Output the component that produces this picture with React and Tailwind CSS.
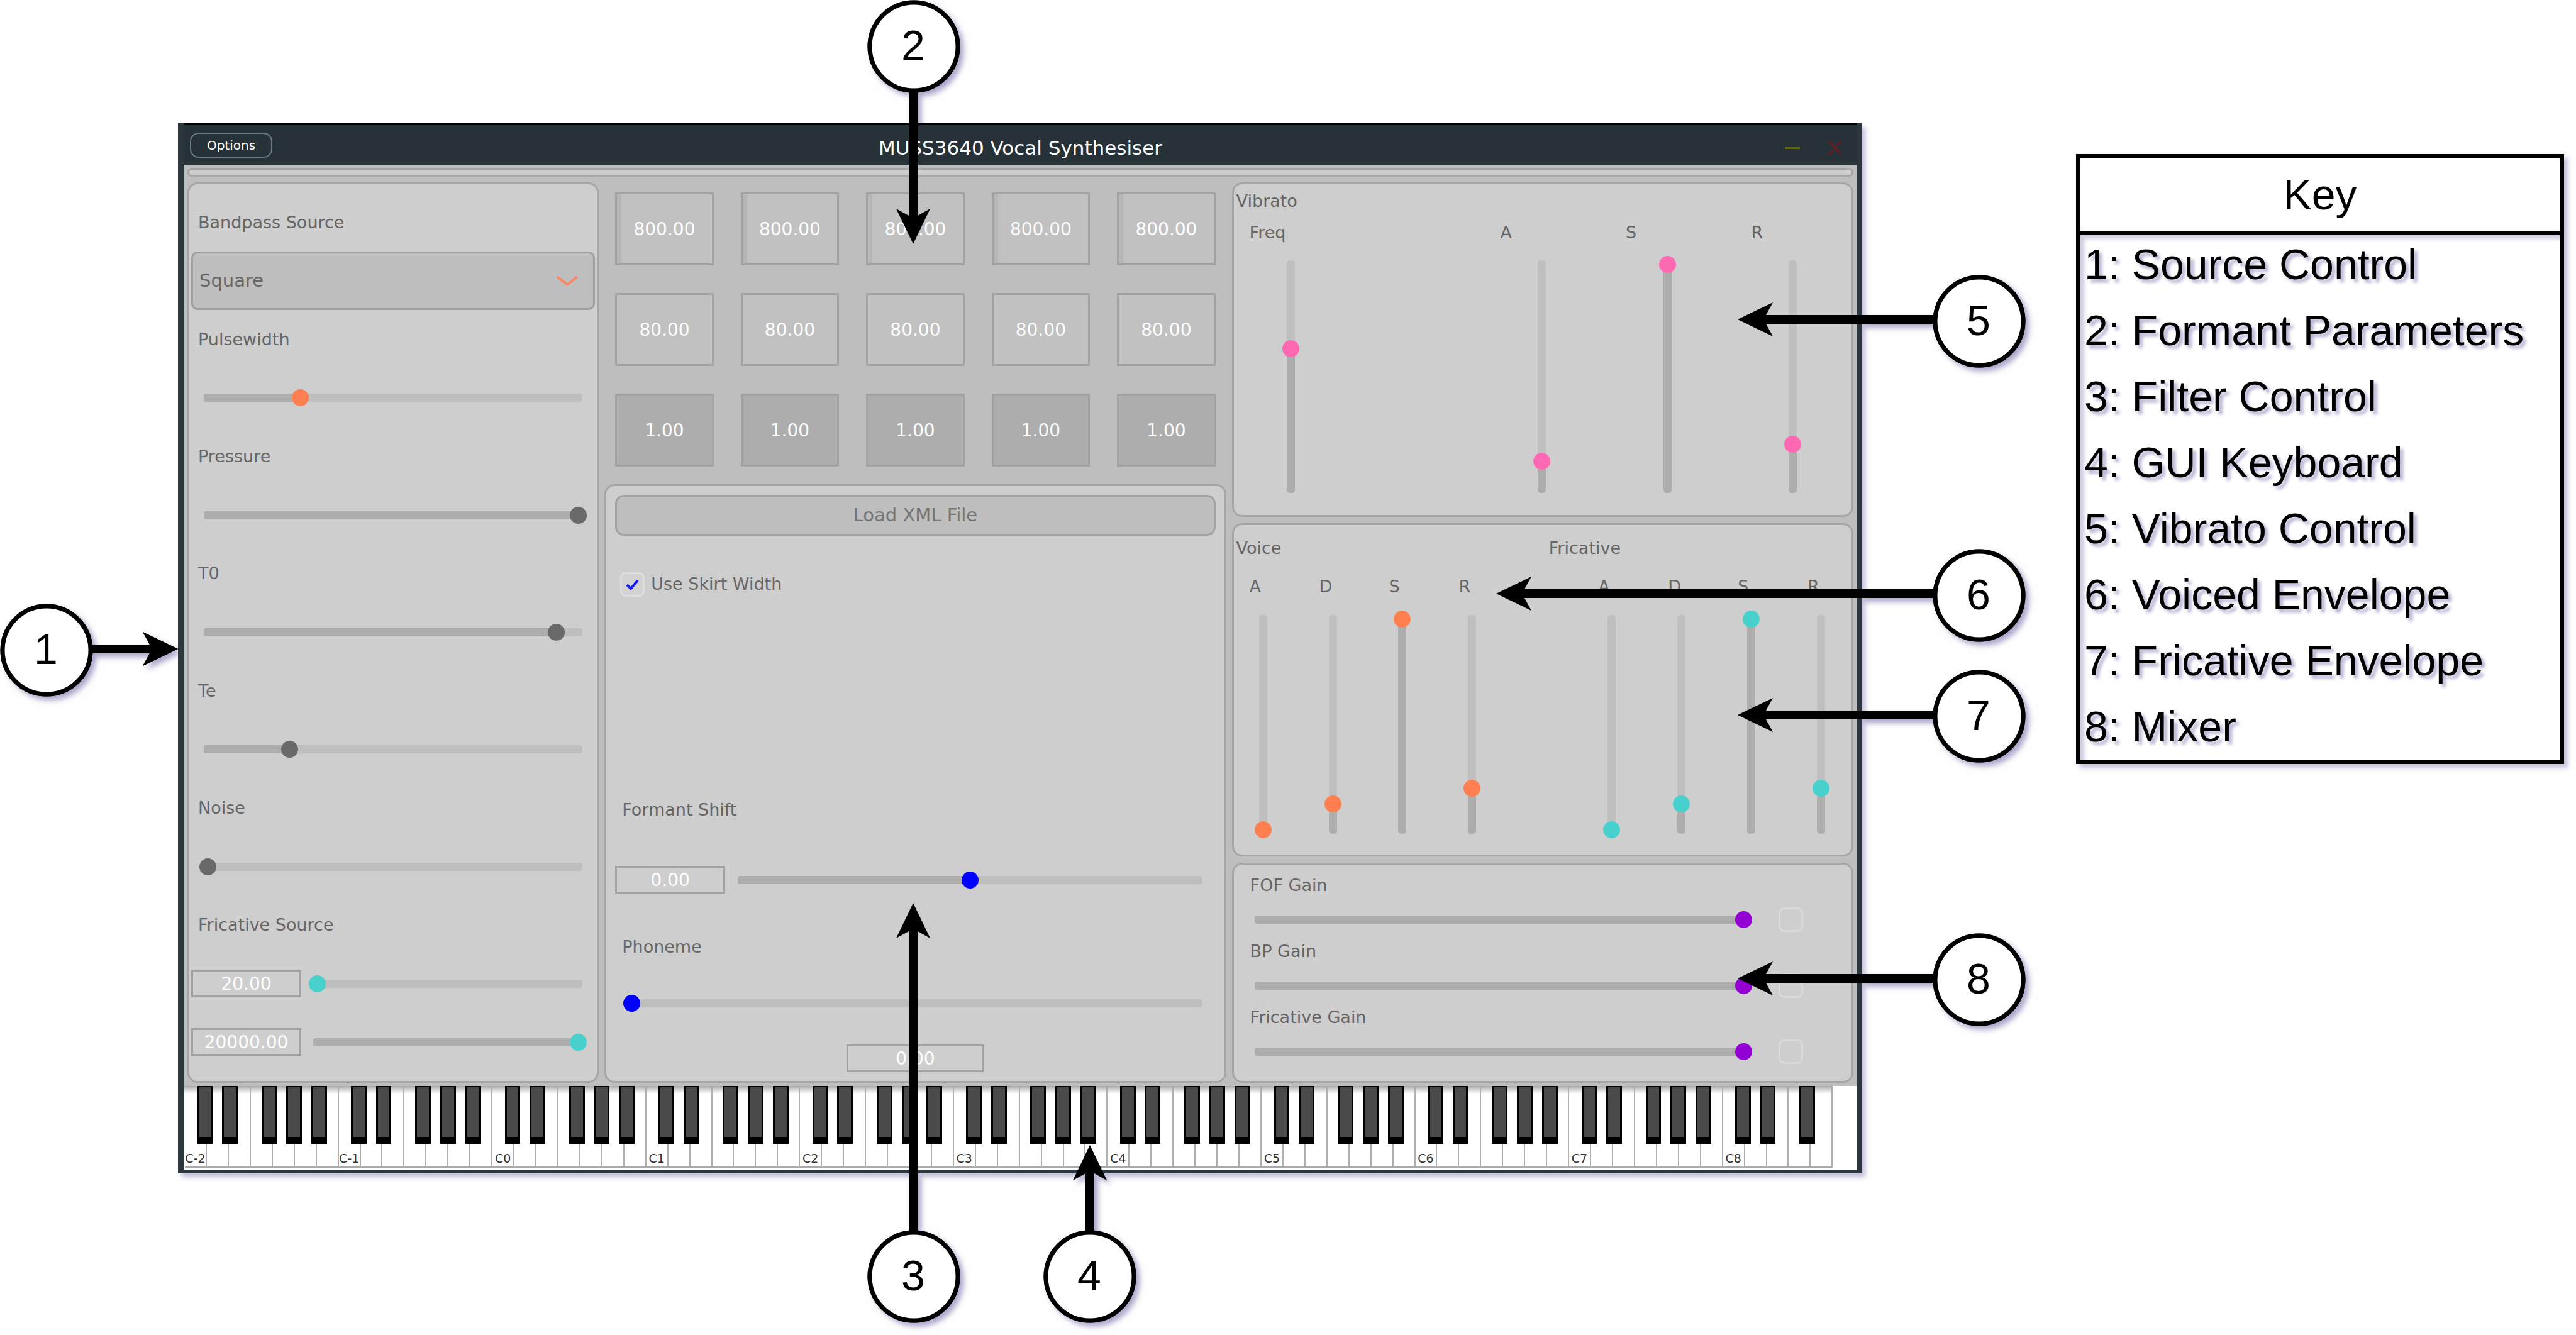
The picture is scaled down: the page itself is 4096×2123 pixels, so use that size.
import React, { useState } from "react";

const LABEL = "text-[27px] leading-[40px] text-[#666666] whitespace-nowrap";
const PANEL = "rounded-[16px] border-[3px] border-[#a6a6a6] bg-[#cecece]";
const VALUE =
  "min-w-0 border-[3px] border-[#a2a2a2] bg-transparent p-0 text-center text-[28px] leading-[36px] text-white outline-none";
const THUMB =
  "[&::-webkit-slider-thumb]:appearance-none [&::-webkit-slider-thumb]:size-[27px] [&::-webkit-slider-thumb]:rounded-full [&::-webkit-slider-thumb]:bg-current";

const TONES = {
  coral: "text-[#ff7f50]",
  grey: "text-[#696969]",
  teal: "text-[#48d1cc]",
  blue: "text-[#0000ff]",
  pink: "text-[#ff69b4]",
  violet: "text-[#9400d3]",
};

function HSlider({ label, value, tone, id }) {
  const [v, setV] = useState(value);
  return (
    <div className="grid min-w-0 flex-1 items-center">
      <div className="mx-[7px] h-[13px] overflow-hidden rounded-[4px] bg-[#bebebe] [grid-area:1/1]">
        <div className="h-full bg-[#adadad]" style={{ width: `${v}%` }} />
      </div>
      <input
        id={id}
        type="range"
        aria-label={label}
        value={v}
        onChange={(e) => setV(Number(e.target.value))}
        className={`m-0 h-[27px] w-full cursor-pointer appearance-none bg-transparent [grid-area:1/1] ${THUMB} ${TONES[tone]}`}
      />
    </div>
  );
}

function VSlider({ label, value, tone, id, height }) {
  const [v, setV] = useState(value);
  return (
    <div className={`grid justify-center justify-items-center ${height}`}>
      <div className="my-[7px] flex w-[13px] flex-col justify-end overflow-hidden rounded-[5px] bg-[#bfbfbf] [grid-area:1/1]">
        <div className="w-full bg-[#adadad]" style={{ height: `${v}%` }} />
      </div>
      <input
        id={id}
        type="range"
        aria-label={label}
        value={v}
        onChange={(e) => setV(Number(e.target.value))}
        className={`m-0 h-full w-[27px] cursor-pointer appearance-none bg-transparent [direction:rtl] [grid-area:1/1] [writing-mode:vertical-lr] ${THUMB} ${TONES[tone]}`}
      />
    </div>
  );
}

function SourceSlider({ id, label, value, tone }) {
  return (
    <>
      <label htmlFor={id} className={`${LABEL} pl-[14px]`}>
        {label}
      </label>
      <div className="flex pl-[16px] pr-[16px]">
        <HSlider id={id} value={value} tone={tone} />
      </div>
    </>
  );
}

function SourcePanel() {
  return (
    <section className={`${PANEL} grid auto-rows-[93px] content-between items-center pb-[15px] pt-[14px]`}>
      <label htmlFor="bandpass" className={`${LABEL} pl-[14px]`}>
        Bandpass Source
      </label>
      <div className="relative mx-[3px]">
        <select
          id="bandpass"
          defaultValue="Square"
          className="h-[93px] w-full appearance-none rounded-[10px] border-[3px] border-[#9f9f9f] bg-[#bebebe] pl-[10px] text-[29px] text-[#666666] outline-none"
        >
          <option>Square</option>
          <option>Saw</option>
          <option>LF Model</option>
        </select>
        <svg
          viewBox="0 0 34 18"
          className="pointer-events-none absolute right-[27px] top-[38px] h-[18px] w-[34px]"
          fill="none"
          stroke="#fb8664"
          strokeWidth="4"
        >
          <path d="M1 2 L17 14.5 L33 2" />
        </svg>
      </div>
      <SourceSlider id="pulsewidth" label="Pulsewidth" value={25} tone="coral" />
      <SourceSlider id="pressure" label="Pressure" value={100} tone="grey" />
      <SourceSlider id="t0" label="T0" value={94} tone="grey" />
      <SourceSlider id="te" label="Te" value={22} tone="grey" />
      <SourceSlider id="noise" label="Noise" value={0} tone="grey" />
      <span className={`${LABEL} pl-[14px]`}>Fricative Source</span>
      <div className="flex items-center gap-[12px] pl-[3px] pr-[16px]">
        <input aria-label="Low cutoff value" defaultValue="20.00" className={`${VALUE} h-[44px] w-[175px]`} />
        <HSlider label="Low cutoff" value={0} tone="teal" />
      </div>
      <div className="flex items-center gap-[12px] pl-[3px] pr-[16px]">
        <input aria-label="High cutoff value" defaultValue="20000.00" className={`${VALUE} h-[44px] w-[175px]`} />
        <HSlider label="High cutoff" value={100} tone="teal" />
      </div>
    </section>
  );
}

const FORMANT_ROWS = [
  { name: "Frequency", value: "800.00", look: "bg-[#c1c1c1] shadow-[inset_7px_0_0_#b6b6b6]" },
  { name: "Bandwidth", value: "80.00", look: "bg-[#c1c1c1]" },
  { name: "Gain", value: "1.00", look: "bg-[#adadad]" },
];

function FormantGrid() {
  return (
    <div className="grid grid-cols-5 gap-x-[43px] gap-y-[44px] px-[17px] pb-[28px] pt-[16px]">
      {FORMANT_ROWS.map((row) =>
        [1, 2, 3, 4, 5].map((n) => (
          <input
            key={row.name + n}
            aria-label={`${row.name} ${n}`}
            defaultValue={row.value}
            className={`h-[116px] w-full min-w-0 border-[3px] border-[#a2a2a2] p-0 text-center text-[28px] text-white outline-none ${row.look}`}
          />
        ))
      )}
    </div>
  );
}

function FilterPanel() {
  return (
    <section className={`${PANEL} flex flex-1 flex-col px-[14px] py-[14px]`}>
      <button className="h-[65px] rounded-[14px] border-[3px] border-[#a2a2a2] bg-[#bebebe] text-[29px] text-[#757575]">
        Load XML File
      </button>
      <label className="ml-[8px] mt-[57px] flex items-center gap-[10px] self-start">
        <span className="grid">
          <input
            type="checkbox"
            defaultChecked
            className="peer size-[39px] appearance-none rounded-[9px] border-[3px] border-[#dedede] bg-[#d2d2d2] [grid-area:1/1]"
          />
          <svg
            viewBox="0 0 39 39"
            className="pointer-events-none hidden size-[39px] [grid-area:1/1] peer-checked:block"
            fill="none"
            stroke="#1616ff"
            strokeWidth="4"
          >
            <path d="M11 20 L17 26 L28 13" />
          </svg>
        </span>
        <span className={LABEL}>Use Skirt Width</span>
      </label>
      <label htmlFor="shift" className={`${LABEL} mt-auto pl-[11px]`}>
        Formant Shift
      </label>
      <div className="mt-[69px] flex items-center gap-[13px]">
        <input aria-label="Formant shift value" defaultValue="0.00" className={`${VALUE} h-[44px] w-[175px]`} />
        <HSlider id="shift" value={50} tone="blue" />
        <span className="w-px" />
      </div>
      <label htmlFor="phoneme" className={`${LABEL} mt-[65px] pl-[11px]`}>
        Phoneme
      </label>
      <div className="mt-[56px] flex pl-[13px] pr-[14px]">
        <HSlider id="phoneme" value={0} tone="blue" />
      </div>
      <input
        aria-label="Phoneme value"
        defaultValue="0.00"
        className={`${VALUE} mt-[52px] h-[44px] w-[219px] self-center`}
      />
    </section>
  );
}

function VibratoPanel() {
  const cols = [
    ["Freq", 62.4],
    null,
    ["A", 12.4],
    ["S", 100],
    ["R", 20],
  ];
  return (
    <section className={`${PANEL} pb-[28px] pt-[7px]`}>
      <h2 className={`${LABEL} pl-[4px]`}>Vibrato</h2>
      <div className="mt-[10px] grid grid-cols-5 gap-[29px] pl-[6px] pr-[8px]">
        {cols.map((c, i) =>
          c ? (
            <div key={i} className="flex flex-col gap-[17px]">
              <label htmlFor={`vib${i}`} className={`${LABEL} pl-[19px]`}>
                {c[0]}
              </label>
              <VSlider id={`vib${i}`} value={c[1]} tone="pink" height="h-[384px]" />
            </div>
          ) : (
            <div key={i} />
          )
        )}
      </div>
    </section>
  );
}

function EnvelopePanel() {
  const adsr = [
    ["A", 0],
    ["D", 12.2],
    ["S", 100],
    ["R", 19.8],
  ];
  const cols = [
    ...adsr.map(([l, v]) => [l, v, "coral", "Voice"]),
    null,
    ...adsr.map(([l, v]) => [l, v, "teal", "Fricative"]),
  ];
  return (
    <section className={`${PANEL} pb-[26px] pt-[17px]`}>
      <div className="grid grid-cols-[499fr_483fr] pl-[4px]">
        <h2 className={LABEL}>Voice</h2>
        <h2 className={LABEL}>Fricative</h2>
      </div>
      <div className="mt-[21px] grid grid-cols-9 gap-[30px] pl-[6px] pr-[8px]">
        {cols.map((c, i) =>
          c ? (
            <div key={i} className="flex flex-col gap-[18px]">
              <label htmlFor={`env${i}`} className={`${LABEL} pl-[19px]`}>
                {c[0]}
              </label>
              <VSlider id={`env${i}`} label={`${c[3]} ${c[0]}`} value={c[1]} tone={c[2]} height="h-[362px]" />
            </div>
          ) : (
            <div key={i} />
          )
        )}
      </div>
    </section>
  );
}

function MixerPanel() {
  return (
    <section className={`${PANEL} flex flex-1 flex-col gap-[11px] pb-[27px] pl-[26px] pr-[77px] pt-[13px]`}>
      {["FOF Gain", "BP Gain", "Fricative Gain"].map((name) => (
        <div key={name} className="flex flex-col gap-[15px]">
          <label htmlFor={name} className={LABEL}>
            {name}
          </label>
          <div className="flex items-center gap-[42px]">
            <HSlider id={name} value={100} tone="violet" />
            <input
              type="checkbox"
              aria-label={`Mute ${name}`}
              className="size-[39px] appearance-none rounded-[9px] border-[3px] border-[#dadada]"
            />
          </div>
        </div>
      ))}
    </section>
  );
}

const BLACK_OFFSET = {
  0: "left-[56%]",
  1: "left-[69%]",
  3: "left-[48%]",
  4: "left-[62%]",
  5: "left-[76%]",
};

function Keyboard() {
  return (
    <div className="relative flex h-[133px] bg-white pl-px pr-[38px]">
      {Array.from({ length: 75 }, (_, k) => {
        const note = k % 7;
        return (
          <div key={k} className="relative flex-1">
            <button
              aria-label={`White key ${k + 1}`}
              className="flex h-[131px] w-full items-end justify-center border-b-[3px] border-r-2 border-b-[#a8aaa8] border-r-[#b0b0b0] bg-white pb-[2px] text-[19px] leading-[22px] text-[#333333]"
            >
              {note === 0 ? `C${k / 7 - 2}` : ""}
            </button>
            {BLACK_OFFSET[note] && k < 74 && (
              <button
                aria-label={`Black key ${k + 1}`}
                className={`absolute top-0 z-20 h-[92px] w-[71%] border-x-[3px] border-b-[11px] border-t-2 border-black bg-[#4a4a4a] ${BLACK_OFFSET[note]}`}
              />
            )}
          </div>
        );
      })}
      <div className="pointer-events-none absolute left-0 right-[38px] top-0 z-10 h-[12px] bg-linear-to-b from-[#a9a9a9] to-transparent" />
    </div>
  );
}

function SynthWindow() {
  return (
    <div className="relative flex-1 border-b-[6px] border-l-[10px] border-r-[8px] border-[#2c363d] bg-[#bebebe] shadow-[6px_6px_7px_#c3c1da]">
      <header className="grid h-[66px] grid-cols-3 items-center border-t-2 border-black bg-[#263238] pt-px">
        <button className="ml-[9px] h-[40px] w-[131px] rounded-[14px] border-2 border-[#6c7a83] text-[20px] leading-[34px] text-white">
          Options
        </button>
        <h1 className="pt-[9px] text-center text-[31px] leading-[40px] whitespace-nowrap text-white">
          MUSS3640 Vocal Synthesiser
        </h1>
        <div className="flex items-center justify-end gap-[44px] pr-[22px] pt-[8px]">
          <button aria-label="Minimise" className="h-[4px] w-[24px] bg-[#62661f]" />
          <button aria-label="Close">
            <svg viewBox="0 0 24 24" className="size-[24px]" stroke="#74181f" strokeWidth="2.5">
              <path d="M2 1 L22 23 M22 1 L2 23" />
            </svg>
          </button>
        </div>
      </header>
      <main className="flex flex-col gap-[9px] px-[5px] pb-[5px] pt-[5px]">
        <div className="h-[14px] rounded-full border-[3px] border-[#a6a6a6] bg-[#cecece]" />
        <div className="grid grid-cols-[654fr_988fr_988fr] gap-[9px]">
          <SourcePanel />
          <div className="flex flex-col">
            <FormantGrid />
            <FilterPanel />
          </div>
          <div className="flex flex-col gap-[10px]">
            <VibratoPanel />
            <EnvelopePanel />
            <MixerPanel />
          </div>
        </div>
      </main>
      <Keyboard />
    </div>
  );
}

const KEY_ITEMS = [
  "Source Control",
  "Formant Parameters",
  "Filter Control",
  "GUI Keyboard",
  "Vibrato Control",
  "Voiced Envelope",
  "Fricative Envelope",
  "Mixer",
];

function Legend() {
  return (
    <aside className="mt-[49px] w-[776px] shrink-0 border-[7px] border-black bg-white font-['Liberation_Sans',sans-serif] text-[68px] text-black shadow-[6px_6px_7px_#c3c1da]">
      <h2 className="h-[122px] border-b-[7px] border-black text-center leading-[115px]">Key</h2>
      <ol className="flex flex-col pl-[6px] leading-[105px] shadow-[inset_6px_6px_6px_#cfcce0] [text-shadow:5px_5px_5px_#b4afd0]">
        {KEY_ITEMS.map((item, i) => (
          <li key={item} className="first:-mt-[6px]">{`${i + 1}: ${item}`}</li>
        ))}
      </ol>
    </aside>
  );
}

const CALLOUTS = [
  { n: 1, cx: 74, cy: 1034, x: 283, y: 1032, turn: 0 },
  { n: 2, cx: 1453, cy: 74, x: 1452, y: 388, turn: 90 },
  { n: 3, cx: 1453, cy: 2030, x: 1452, y: 1436, turn: -90 },
  { n: 4, cx: 1733, cy: 2030, x: 1733, y: 1821, turn: -90 },
  { n: 5, cx: 3147, cy: 511, x: 2763, y: 508, turn: 180 },
  { n: 6, cx: 3147, cy: 947, x: 2379, y: 944, turn: 180 },
  { n: 7, cx: 3147, cy: 1139, x: 2763, y: 1137, turn: 180 },
  { n: 8, cx: 3147, cy: 1558, x: 2763, y: 1556, turn: 180 },
];

function CalloutShapes({ c }) {
  const len = Math.hypot(c.cx - c.x, c.cy - c.y) - 70;
  return (
    <>
      <g transform={`translate(${c.x} ${c.y}) rotate(${c.turn})`}>
        <path d={`M0 0 L-56 -27 L-45 -7 L${-len} -7 L${-len} 7 L-45 7 L-56 27 Z`} fill="black" />
      </g>
      <circle cx={c.cx} cy={c.cy} r="70" fill="white" stroke="black" strokeWidth="7" />
    </>
  );
}

export default function App() {
  return (
    <div className="relative flex min-h-screen items-start gap-[341px] bg-[#fefefe] pl-[283px] pr-[19px] pt-[196px] font-['DejaVu_Sans',sans-serif]">
      <svg
        viewBox="0 0 4096 2123"
        className="pointer-events-none absolute inset-0 h-full w-full"
        style={{ filter: "drop-shadow(6px 6px 4px #aaa6ca)" }}
        aria-hidden="true"
      >
        {CALLOUTS.map((c) => (
          <CalloutShapes key={c.n} c={c} />
        ))}
      </svg>
      <SynthWindow />
      <Legend />
      <svg viewBox="0 0 4096 2123" className="pointer-events-none absolute inset-0 z-30 h-full w-full">
        {CALLOUTS.map((c) => (
          <g key={c.n}>
            <CalloutShapes c={c} />
            <text
              x={c.cx - 1}
              y={c.cy + 22}
              textAnchor="middle"
              className="font-['Liberation_Sans',sans-serif] text-[68px]"
            >
              {c.n}
            </text>
          </g>
        ))}
      </svg>
    </div>
  );
}
